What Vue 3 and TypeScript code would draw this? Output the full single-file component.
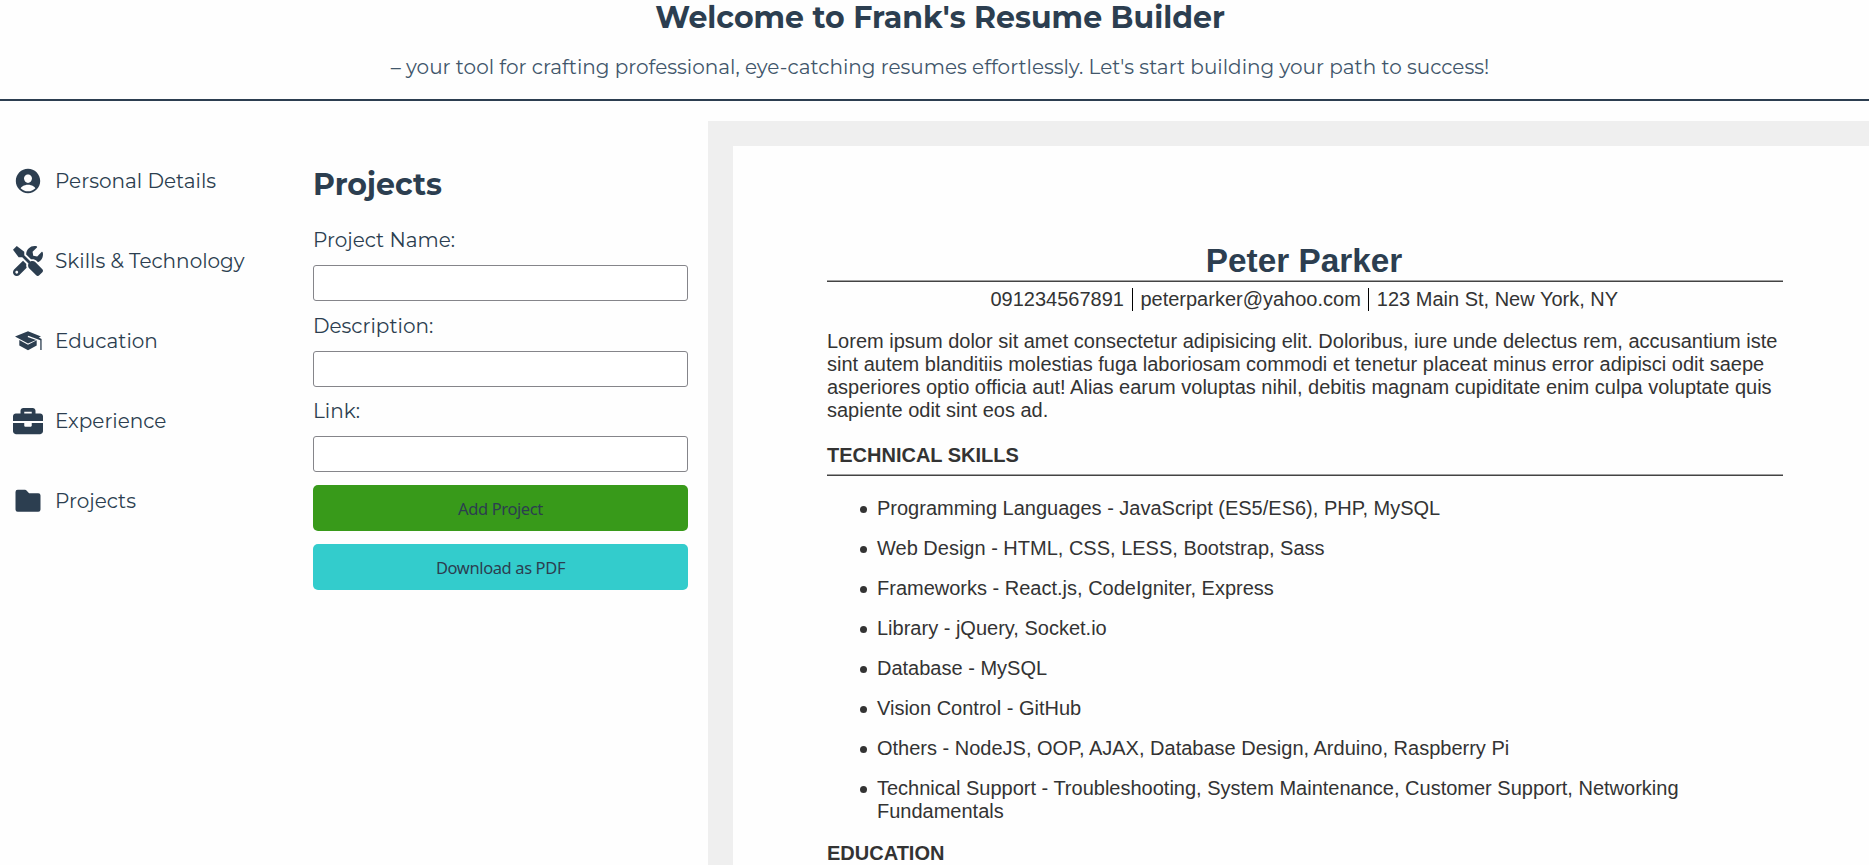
<script setup lang="ts">
import { ref } from 'vue'

interface NavItem {
  label: string
  viewBox: string
  path: string
}

const nav: NavItem[] = [
  {
    label: 'Personal Details',
    viewBox: '0 0 512 512',
    path: 'M256 48C141.31 48 48 141.31 48 256s93.31 208 208 208 208-93.31 208-208S370.69 48 256 48zm-50.22 116.82C218.45 151.39 236.28 144 256 144s37.39 7.44 50.11 20.94c12.89 13.68 19.16 32.06 17.68 51.82C320.83 256 290.43 288 256 288s-64.89-32-67.79-71.25c-1.47-19.92 4.79-38.36 17.57-51.93zM256 432a175.49 175.49 0 0 1-126-53.22 122.91 122.91 0 0 1 35.14-33.44C190.63 329 222.89 320 256 320s65.37 9 90.83 25.34A122.87 122.87 0 0 1 382 378.78 175.45 175.45 0 0 1 256 432z',
  },
  {
    label: 'Skills & Technology',
    viewBox: '0 0 512 512',
    path: 'M501.1 395.7L384 278.6c-23.1-23.1-57.6-27.6-85.4-13.9L192 158.1V96L64 0 0 64l96 128h62.1l106.6 106.6c-13.6 27.8-9.2 62.3 13.9 85.4l117.1 117.1c14.6 14.6 38.2 14.6 52.7 0l52.7-52.7c14.5-14.6 14.5-38.2 0-52.7zM331.7 225c28.3 0 54.9 11 74.9 31l19.4 19.4c15.8-6.9 30.8-16.5 43.8-29.5 37.1-37.1 49.7-89.3 37.9-136.7-2.2-9-13.5-12.1-20.1-5.5l-74.4 74.4-67.9-11.3L334 98.9l74.4-74.4c6.6-6.6 3.4-17.9-5.7-20.2-47.4-11.7-99.6.9-136.6 37.9-28.5 28.5-41.9 66.1-41.2 103.6l82.1 82.1c8.1-1.9 16.5-2.9 24.7-2.9zm-103.9 82l-56.7-56.7L18.7 402.8c-25 25-25 65.5 0 90.5s65.5 25 90.5 0l123.6-123.6c-7.6-19.9-9.9-41.6-5-62.7zM64 472c-13.2 0-24-10.8-24-24 0-13.3 10.7-24 24-24s24 10.7 24 24c0 13.2-10.7 24-24 24z',
  },
  {
    label: 'Education',
    viewBox: '0 0 30 30',
    path: 'M2 10.600L15 5.200l13 5.400-2.200 1 2.800 1.400v11h-1.300V14.200L15.300 9.800l-.7 1.200 8.500 3.100L15 17.500zM6.300 13.900L15 18.700l8.700-4.500v5.300L15 24.300l-8.700-4.800z',
  },
  {
    label: 'Experience',
    viewBox: '0 0 512 512',
    path: 'M320 336c0 8.84-7.16 16-16 16h-96c-8.84 0-16-7.16-16-16v-48H0v144c0 25.6 22.4 48 48 48h416c25.6 0 48-22.4 48-48V288H320v48zm144-208h-80V80c0-25.6-22.4-48-48-48H176c-25.6 0-48 22.4-48 48v48H48c-25.6 0-48 22.4-48 48v80h512v-80c0-25.6-22.4-48-48-48zm-144 0H192V96h128v32z',
  },
  {
    label: 'Projects',
    viewBox: '0 0 30 30',
    path: 'M4.700 3.800h7.300q.9 0 1.500.6l2.600 2.800h9.200q2.200 0 2.200 2.200v14.200q0 2.200-2.200 2.200H4.700q-2.200 0-2.200-2.200V6q0-2.200 2.200-2.200z',
  },
]

const fields = ref([
  { label: 'Project Name:', value: '' },
  { label: 'Description:', value: '' },
  { label: 'Link:', value: '' },
])

const contacts = ['091234567891', 'peterparker@yahoo.com', '123 Main St, New York, NY']

const skills = [
  'Programming Languages - JavaScript (ES5/ES6), PHP, MySQL',
  'Web Design - HTML, CSS, LESS, Bootstrap, Sass',
  'Frameworks - React.js, CodeIgniter, Express',
  'Library - jQuery, Socket.io',
  'Database - MySQL',
  'Vision Control - GitHub',
  'Others - NodeJS, OOP, AJAX, Database Design, Arduino, Raspberry Pi',
  'Technical Support - Troubleshooting, System Maintenance, Customer Support, Networking Fundamentals',
]
</script>

<template>
  <div class="app">
    <header class="header">
      <h1>Welcome to Frank's Resume Builder</h1>
      <p>– your tool for crafting professional, eye-catching resumes effortlessly. Let's start building your path to success!</p>
    </header>
    <main class="main">
      <nav class="nav">
        <a v-for="item in nav" :key="item.label" class="nav-item">
          <svg class="icon" :viewBox="item.viewBox"><path :d="item.path" /></svg>
          <span>{{ item.label }}</span>
        </a>
      </nav>
      <form class="form" @submit.prevent>
        <h2>Projects</h2>
        <label v-for="f in fields" :key="f.label" class="field">
          <span class="field-label">{{ f.label }}</span>
          <input v-model="f.value" type="text" />
        </label>
        <button class="add" type="button">Add Project</button>
        <button class="download" type="button">Download as PDF</button>
      </form>
      <section class="preview">
        <article class="paper">
          <h1 class="name">Peter Parker</h1>
          <div class="rule"></div>
          <div class="contacts">
            <span v-for="c in contacts" :key="c">{{ c }}</span>
          </div>
          <p class="summary">
            Lorem ipsum dolor sit amet consectetur adipisicing elit. Doloribus, iure unde delectus rem, accusantium iste
            sint autem blanditiis molestias fuga laboriosam commodi et tenetur placeat minus error adipisci odit saepe
            asperiores optio officia aut! Alias earum voluptas nihil, debitis magnam cupiditate enim culpa voluptate quis
            sapiente odit sint eos ad.
          </p>
          <h3>TECHNICAL SKILLS</h3>
          <div class="rule"></div>
          <ul class="skills">
            <li v-for="s in skills" :key="s">{{ s }}</li>
          </ul>
          <h3>EDUCATION</h3>
          <div class="rule"></div>
        </article>
      </section>
    </main>
  </div>
</template>

<style>
body {
  margin: 0;
  background: #fefefe;
}
</style>

<style scoped>
* {
  box-sizing: border-box;
}
h1, h2, h3, p, ul {
  margin: 0;
}
.app {
  height: 865px;
  overflow: hidden;
  display: flex;
  flex-direction: column;
  font-family: Montserrat, Inter, sans-serif;
  color: #2c3e50;
  font-size: 20px;
}
.header {
  flex: none;
  height: 101px;
  border-bottom: 2px solid #2c3e50;
  text-align: center;
  padding-left: 11px;
}
.header h1 {
  font-size: 30px;
  line-height: 36px;
}
.header p {
  margin-top: 18px;
  line-height: 26px;
  color: #41566b;
}
.main {
  flex: 1;
  min-height: 0;
  display: flex;
  padding-top: 20px;
}
.nav {
  width: 313px;
  flex: none;
  padding: 45px 0 0 13px;
  display: flex;
  flex-direction: column;
  gap: 50px;
}
.nav-item {
  height: 30px;
  display: flex;
  align-items: center;
  gap: 12px;
}
.icon {
  width: 30px;
  height: 30px;
  fill: #2c3e50;
}
.form {
  width: 375px;
  flex: none;
  margin-right: 20px;
  padding-top: 45px;
  display: flex;
  flex-direction: column;
}
.form h2 {
  font-size: 30px;
  line-height: 38px;
}
.field {
  display: flex;
  flex-direction: column;
  height: 85.5px;
}
.field-label {
  line-height: 24px;
}
.form h2 + .field {
  margin-top: 24px;
}
.field input {
  margin-top: 13px;
  width: 375px;
  height: 36px;
  border: 1px solid #85858a;
  border-radius: 3px;
  background: #fff;
  outline: none;
}
button {
  height: 46px;
  padding: 2px 0 0;
  border: 0;
  border-radius: 5px;
  color: #2c3e50;
  font-family: Tahoma, "Noto Sans", sans-serif;
  font-size: 16.5px;
  letter-spacing: -0.38px;
}
.add {
  background: #389a1a;
}
.download {
  margin-top: 13px;
  background: #33cccc;
}
.preview {
  flex: 1;
  min-width: 0;
  background: #efefef;
  padding: 25px 0 0 25px;
  overflow: hidden;
}
.paper {
  width: 1144px;
  height: 1200px;
  padding: 96px 94px;
  background: #fefefe;
  font-family: Arial, "Liberation Sans", sans-serif;
  font-size: 20px;
  line-height: 23px;
  color: #333;
}
.name {
  color: #2c3e50;
  font-size: 33.33px;
  line-height: 38px;
  text-align: center;
  padding-right: 2px;
}
.rule {
  height: 2px;
  border-top: 1px solid #a0a0a0;
  border-bottom: 1px solid #444;
}
.contacts {
  margin-top: 6px;
  padding-right: 2px;
  display: flex;
  justify-content: center;
}
.contacts span {
  padding: 0 8px;
}
.contacts span + span {
  padding: 0 7.5px;
  border-left: 1px solid #000;
}
.summary {
  margin-top: 19px;
}
h3 {
  margin-top: 22px;
  font-size: 20px;
  line-height: 23px;
}
h3 + .rule {
  margin-top: 7px;
}
.skills {
  margin-top: 21px;
  padding: 0;
  list-style: none;
}
.skills li {
  display: flex;
}
.skills li::before {
  content: "";
  flex: none;
  width: 7px;
  height: 7px;
  margin: 9px 10px 0 33px;
  border-radius: 50%;
  background: #333;
}
.skills li + li {
  margin-top: 17px;
}
.skills + h3 {
  margin-top: 19px;
}
</style>
